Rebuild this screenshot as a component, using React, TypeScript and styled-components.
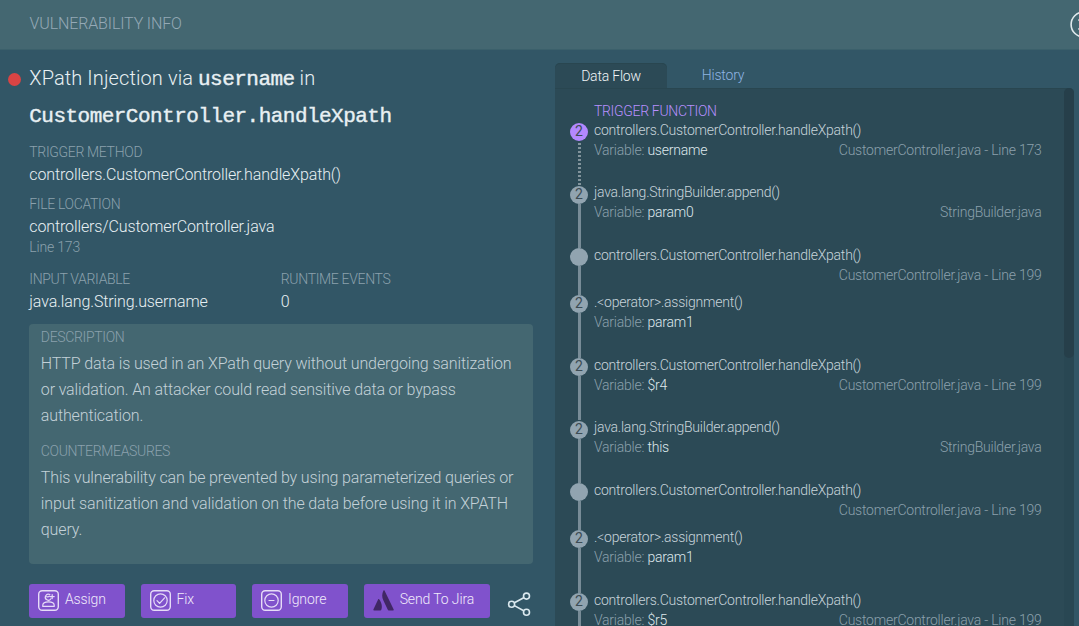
import React from "react";
import styled, { createGlobalStyle } from "styled-components";

const GlobalStyle = createGlobalStyle`
  * { box-sizing: border-box; }
  body { margin: 0; overflow: hidden; background: #325666; }
`;

const Page = styled.div`
  height: 626px;
  display: flex;
  flex-direction: column;
  overflow: hidden;
  background: #325666;
  color: #e8f0f3;
  font-family: Roboto, "Liberation Sans", sans-serif;
  font-weight: 300;
`;

const Header = styled.header`
  flex: none;
  height: 50px;
  display: flex;
  align-items: center;
  justify-content: space-between;
  padding: 0 0 2px 29.5px;
  background: #446771;
  border-bottom: 1px solid #3b606b;
  overflow: hidden;
`;

const HeaderTitle = styled.h1`
  margin: 0;
  font-size: 16px;
  font-weight: 300;
  letter-spacing: -0.13px;
  color: #95a9b6;
`;

const CloseButton = styled.button`
  flex: none;
  width: 27px;
  height: 27px;
  margin: 2px -18px 0 0;
  padding: 0;
  border: 0;
  background: none;
  svg { display: block; }
`;

const Body = styled.div`
  flex: 1;
  min-height: 0;
  display: flex;
`;

const Details = styled.section`
  flex: none;
  width: 555px;
  padding: 10px 22px 0 29.3px;
`;

const Title = styled.h2`
  margin: 0 0 7px;
  display: grid;
  font-size: 20px;
  font-weight: 300;
  line-height: 37.5px;
  letter-spacing: 0.1px;
`;

const TitleLine = styled.div`
  display: flex;
  align-items: center;
  height: 37.5px;
  white-space: pre;
`;

const SeverityDot = styled.i`
  width: 13px;
  height: 13px;
  margin: 1px 8.7px 0 -21.7px;
  border-radius: 50%;
  background: #d94444;
`;

const Code = styled.code`
  font-family: "Liberation Mono", monospace;
  font-size: 21px;
  font-weight: 400;
  letter-spacing: -0.53px;
  -webkit-text-stroke: 0.4px currentColor;
`;

const Field = styled.div<{ $gap?: number }>`
  margin-bottom: ${(p) => p.$gap ?? 7}px;
`;

const Label = styled.div`
  font-size: 14px;
  line-height: 20px;
  letter-spacing: -0.33px;
  color: #8ba1ad;
  white-space: nowrap;
`;

const Value = styled.div`
  font-size: 16px;
  line-height: 25.5px;
  letter-spacing: -0.12px;
  white-space: nowrap;
`;

const Note = styled.div`
  font-size: 14px;
  line-height: 15px;
  letter-spacing: -0.18px;
  color: #8ba1ad;
`;

const Columns = styled.div`
  display: grid;
  grid-template-columns: 251.5px 1fr;
  height: 55.5px;
`;

const Card = styled.div`
  width: 503.5px;
  height: 240px;
  padding: 3px 11.5px 0;
  border-radius: 4px;
  background: #446771;
`;

const Paragraph = styled.p`
  margin: 4px 0 12.6px;
  font-size: 16px;
  line-height: 25.8px;
  letter-spacing: -0.13px;
  color: #c3d1d8;
  white-space: nowrap;
`;

const Actions = styled.div`
  display: flex;
  gap: 16px;
  margin-top: 19.5px;
`;

const ActionButton = styled.button<{ $w: number; $gap?: number }>`
  width: ${(p) => p.$w}px;
  height: 34px;
  display: flex;
  align-items: center;
  gap: ${(p) => p.$gap ?? 6}px;
  padding: 0 0 0 8.7px;
  border: 0;
  border-radius: 3px;
  background: #8052cc;
  color: #f0eafb;
  font: 300 14px/31px Roboto, sans-serif;
  letter-spacing: -0.12px;
  svg { flex: none; }
  span { height: 34px; }
`;

const ShareButton = styled.button`
  width: 26px;
  height: 26px;
  margin: 7.5px 0 0 1.5px;
  padding: 0;
  border: 0;
  background: none;
`;

const FlowPanel = styled.section`
  flex: none;
  width: 519px;
  padding-top: 13px;
  display: flex;
  flex-direction: column;
`;

const Tabs = styled.nav`
  flex: none;
  display: flex;
  height: 25px;
`;

const Tab = styled.div<{ $active?: boolean }>`
  width: 112px;
  height: 25px;
  text-align: center;
  font-size: 14px;
  letter-spacing: -0.2px;
  line-height: ${(p) => (p.$active ? 26 : 24)}px;
  border-radius: 5px 5px 0 0;
  background: ${(p) => (p.$active ? "#2c4a56" : "transparent")};
  box-shadow: ${(p) => (p.$active ? "inset 0 1px #294650" : "none")};
  color: ${(p) => (p.$active ? "#f0f5f7" : "#8fb4e2")};
`;

const FlowContent = styled.div`
  flex: 1;
  min-height: 0;
  display: flex;
  border-radius: 0 5px 0 0;
  background: #2c4a56;
  box-shadow: inset 0 1px #294650;
`;

const FlowList = styled.div`
  flex: 1;
  padding: 12.8px 22.5px 0 15px;
  overflow: hidden;
`;

const FlowHeading = styled.div`
  padding-left: 24px;
  font-size: 14px;
  line-height: 20px;
  height: 20px;
  letter-spacing: -0.32px;
  color: #b88fff;
`;

const Step = styled.div<{ $short: boolean }>`
  display: flex;
  height: ${(p) => (p.$short ? 47 : 62.65)}px;
`;

const Rail = styled.div`
  flex: none;
  width: 24px;
  display: flex;
  flex-direction: column;
  padding: 2.2px 6px 0 0;
`;

const Bullet = styled.div<{ $active: boolean }>`
  flex: none;
  height: 18px;
  border-radius: 50%;
  background: ${(p) => (p.$active ? "#b388ff" : "#91a4b0")};
  color: #3c4c55;
  font-size: 14px;
  font-weight: 400;
  line-height: 17px;
  text-align: center;
`;

const Connector = styled.div<{ $dotted: boolean }>`
  flex: 1;
  width: 3px;
  margin: 0 auto -2px;
  background: ${(p) =>
    p.$dotted
      ? "repeating-linear-gradient(transparent 0 2px, #82949c 2px 4px)"
      : "#788c97"};
`;

const StepText = styled.div`
  flex: 1;
  margin-top: -1px;
  font-size: 14px;
  line-height: 20px;
  letter-spacing: -0.23px;
  color: #c7d4db;
`;

const StepMeta = styled.div`
  display: flex;
  justify-content: space-between;
  color: #8ba0ac;
  b { font-weight: 300; color: #dee8ed; }
`;

const Track = styled.div`
  flex: none;
  width: 10px;
  border-radius: 5px 5px 0 0;
  background: #294753;
`;

const Thumb = styled.div`
  height: 270px;
  border-radius: 5px;
  background: #263f4a;
`;

const Frame = ({ children }: { children: React.ReactNode }) => (
  <svg width="21" height="21" viewBox="0 0 21 21" fill="none" stroke="#e6dcf7" strokeWidth="1.2" strokeLinecap="round" strokeLinejoin="round">
    <rect x=".7" y=".7" width="19.6" height="19.6" rx="3.5" strokeWidth="1.4" />
    {children}
  </svg>
);

const AssignIcon = () => (
  <Frame>
    <path d="M11.8 4.6A3 3 0 1 0 12.9 8.8M8 6.5c1.3.6 2.6.3 3.3-.4M14.2 4.6v4M12.2 6.6h4" />
    <path d="M4.8 16.4v-1.2c0-2.1 1.8-3.4 5.7-3.4s5.7 1.3 5.7 3.4v1.2z" />
  </Frame>
);

const FixIcon = () => (
  <Frame>
    <circle cx="10.5" cy="10.5" r="6.7" />
    <path d="m7 10.6 2.6 2.8 5-5.6" />
  </Frame>
);

const IgnoreIcon = () => (
  <Frame>
    <circle cx="10.5" cy="10.5" r="6.7" />
    <path d="M8 10.5h5" />
  </Frame>
);

const JiraIcon = () => (
  <svg width="21" height="21" viewBox="0 0 21 21" fill="#402765">
    <path d="M10.5.5C8.8 4 8.8 7 10.4 10.4l4.4 9.4c.2.4.5.6.9.6h4.6c.4 0 .6-.4.4-.8L11.5.5c-.2-.4-.8-.4-1 0z" />
    <path d="M6.1 9.2c-.3-.4-.7-.3-.9.1L.4 19.6c-.2.4.1.8.5.8h6.5c.4 0 .7-.2.9-.6 1.2-2.7.6-7.2-2.2-10.6z" />
  </svg>
);

const ShareIcon = () => (
  <svg width="26" height="26" viewBox="0 0 26 26" fill="none" stroke="#dbe9ef" strokeWidth="1.6">
    <circle cx="4.6" cy="13.2" r="3" />
    <circle cx="19.5" cy="5.1" r="3" />
    <circle cx="19.5" cy="21.3" r="3" />
    <path d="m7.4 11.8 9.3-5.1M7.4 14.6l9.3 5.1" />
  </svg>
);

const CloseIcon = () => (
  <svg width="27" height="27" viewBox="0 0 27 27" fill="none" stroke="#e0eaed" strokeWidth="1.6">
    <circle cx="13.5" cy="13.5" r="12.4" />
    <path d="m8.5 8.5 10 10M18.5 8.5l-10 10" />
  </svg>
);

interface StepData {
  fn: string;
  variable?: string;
  file: string;
}

const HANDLER = "controllers.CustomerController.handleXpath()";
const APPEND = "java.lang.StringBuilder.append()";

const steps: StepData[] = [
  { fn: HANDLER, variable: "username", file: "CustomerController.java - Line 173" },
  { fn: APPEND, variable: "param0", file: "StringBuilder.java" },
  { fn: HANDLER, file: "CustomerController.java - Line 199" },
  { fn: ".<operator>.assignment()", variable: "param1", file: "" },
  { fn: HANDLER, variable: "$r4", file: "CustomerController.java - Line 199" },
  { fn: APPEND, variable: "this", file: "StringBuilder.java" },
  { fn: HANDLER, file: "CustomerController.java - Line 199" },
  { fn: ".<operator>.assignment()", variable: "param1", file: "" },
  { fn: HANDLER, variable: "$r5", file: "CustomerController.java - Line 199" },
];

const FlowStep = ({ step, first }: { step: StepData; first: boolean }) => (
  <Step $short={!step.variable}>
    <Rail>
      <Bullet $active={first}>{step.variable ? "2" : ""}</Bullet>
      <Connector $dotted={first} />
    </Rail>
    <StepText>
      <div>{step.fn}</div>
      <StepMeta>
        <span>{step.variable && <>Variable: <b>{step.variable}</b></>}</span>
        <span>{step.file}</span>
      </StepMeta>
    </StepText>
  </Step>
);

export default function App() {
  return (
    <Page>
      <GlobalStyle />
      <Header>
        <HeaderTitle>VULNERABILITY INFO</HeaderTitle>
        <CloseButton aria-label="Close"><CloseIcon /></CloseButton>
      </Header>
      <Body>
        <Details>
          <Title>
            <TitleLine>
              <SeverityDot />
              <span>XPath Injection via <Code>username</Code> in</span>
            </TitleLine>
            <TitleLine><Code>CustomerController.handleXpath</Code></TitleLine>
          </Title>
          <Field $gap={6.5}>
            <Label>TRIGGER METHOD</Label>
            <Value>controllers.CustomerController.handleXpath()</Value>
          </Field>
          <Field $gap={14}>
            <Label>FILE LOCATION</Label>
            <Value>controllers/CustomerController.java</Value>
            <Note>Line 173</Note>
          </Field>
          <Columns>
            <div>
              <Label>INPUT VARIABLE</Label>
              <Value>java.lang.String.username</Value>
            </div>
            <div>
              <Label>RUNTIME EVENTS</Label>
              <Value>0</Value>
            </div>
          </Columns>
          <Card>
            <Label>DESCRIPTION</Label>
            <Paragraph>
              HTTP data is used in an XPath query without undergoing sanitization<br />
              or validation. An attacker could read sensitive data or bypass<br />
              authentication.
            </Paragraph>
            <Label>COUNTERMEASURES</Label>
            <Paragraph>
              This vulnerability can be prevented by using parameterized queries or<br />
              input sanitization and validation on the data before using it in XPATH<br />
              query.
            </Paragraph>
          </Card>
          <Actions>
            <ActionButton $w={95.7}><AssignIcon /><span>Assign</span></ActionButton>
            <ActionButton $w={95.7}><FixIcon /><span>Fix</span></ActionButton>
            <ActionButton $w={95.7}><IgnoreIcon /><span>Ignore</span></ActionButton>
            <ActionButton $w={125.7}><JiraIcon /><span>Send To Jira</span></ActionButton>
            <ShareButton aria-label="Share"><ShareIcon /></ShareButton>
          </Actions>
        </Details>
        <FlowPanel>
          <Tabs>
            <Tab $active>Data Flow</Tab>
            <Tab>History</Tab>
          </Tabs>
          <FlowContent>
            <FlowList>
              <FlowHeading>TRIGGER FUNCTION</FlowHeading>
              {steps.map((step, i) => (
                <FlowStep key={i} step={step} first={i === 0} />
              ))}
            </FlowList>
            <Track><Thumb /></Track>
          </FlowContent>
        </FlowPanel>
      </Body>
    </Page>
  );
}
